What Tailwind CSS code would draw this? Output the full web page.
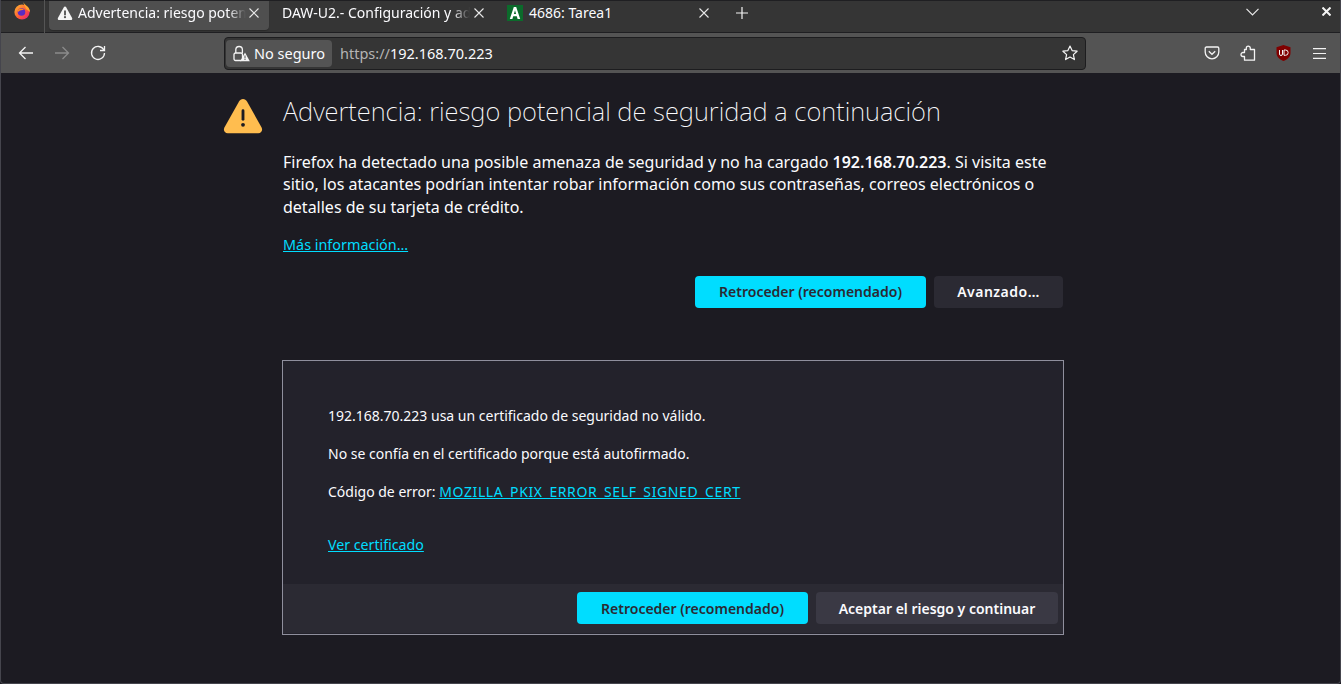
<!DOCTYPE html>
<html lang="es"><head><meta charset="utf-8"><title>Advertencia</title>
<script src="https://cdn.jsdelivr.net/npm/@tailwindcss/browser@4"></script></head>
<body class="m-0 h-[684px] w-[1341px] overflow-hidden bg-[#1c1b22] font-['Noto_Sans',sans-serif] text-[#fbfbfe]">
<div class="flex h-[684px] flex-col rounded-b-[4px] border-x border-b border-[#45454d]">
<!-- tabs -->
<div class="flex h-[33px] items-start border-t border-b border-[#1f1f22] bg-[#353535] text-[14px] leading-[20px]">
  <div class="flex h-[31px] w-[43px] items-start justify-center pt-[1px]">
    <svg width="18" height="18" viewBox="0 0 18 18" class="mr-[2px]"><defs><linearGradient id="ff" x1="0" y1="0" x2="1" y2="1"><stop offset="0" stop-color="#ffbd2e"/><stop offset=".55" stop-color="#ff5a36"/><stop offset="1" stop-color="#e31587"/></linearGradient></defs><circle cx="9" cy="10" r="7.6" fill="url(#ff)"/><path d="M10 0c1 2 3 3 5 5 1 1 2 3 2 5l-4-3z" fill="#ffa42e"/><circle cx="8.5" cy="10" r="3.8" fill="#5b2bc4"/><path d="M5 8c2-2 5-1 6 0-2 0-4 0-6 2z" fill="#ff8a1e"/></svg>
  </div>
  <div class="mt-[-1px] h-[33px] w-px bg-[#555]"></div>
  <div class="ml-[4px] flex h-[29px] w-[220px] items-center rounded-b-[4px] bg-[#4f4f4f] pb-[5px] pl-[8px] pr-[10px] shadow-[0_1px_1px_#2a2a2a]">
    <svg width="16" height="16" viewBox="0 0 16 16" class="mr-[5px] shrink-0"><path d="M8 1.600c.5 0 1 .3 1.300.8l5.800 10.500c.5 1-.2 2.100-1.300 2.100H2.200c-1.100 0-1.800-1.100-1.300-2.100L6.700 2.400C7 1.900 7.500 1.600 8 1.600z" fill="#f4f4f4"/><rect x="7.100" y="5.500" width="1.800" height="4.800" fill="#4f4f4f"/><circle cx="8" cy="12.200" r="1.100" fill="#4f4f4f"/></svg>
    <span class="w-[168px] overflow-hidden whitespace-nowrap [mask-image:linear-gradient(to_left,transparent,black_18px)]">Advertencia: riesgo potencial de seguridad</span>
    <svg width="10" height="10" viewBox="0 0 10 10" class="ml-auto shrink-0" stroke="#e8e8e8" stroke-width="1.100"><path d="M.5.500l9 9M9.500.500l-9 9"/></svg>
  </div>
  <div class="flex h-[29px] w-[223px] items-center pb-[5px] pl-[13px] pr-[8px]">
    <span class="w-[188px] overflow-hidden whitespace-nowrap [mask-image:linear-gradient(to_left,transparent,black_18px)]">DAW-U2.- Configuración y administración</span>
    <svg width="10" height="10" viewBox="0 0 10 10" class="ml-auto shrink-0" stroke="#e8e8e8" stroke-width="1.100"><path d="M.5.500l9 9M9.500.500l-9 9"/></svg>
  </div>
  <div class="flex h-[29px] w-[225px] items-center pb-[5px] pl-[15px] pr-[8px]">
    <svg width="16" height="16" viewBox="0 0 16 16" class="mr-[6px] shrink-0"><rect width="16" height="16" fill="#0b6b2b"/><path d="M2.800 14L6.800 2h2.400l4 12h-2.600l-.8-2.800H6.200L5.400 14zM6.900 9h2.200L8 5.200z" fill="#fff"/></svg>
    <span class="whitespace-nowrap">4686: Tarea1</span>
    <svg width="10" height="10" viewBox="0 0 10 10" class="ml-auto shrink-0" stroke="#e8e8e8" stroke-width="1.100"><path d="M.5.500l9 9M9.500.500l-9 9"/></svg>
  </div>
  <div class="ml-[19px] flex h-[24px] w-[12px] items-center justify-center">
    <svg width="12" height="12" viewBox="0 0 12 12" stroke="#f4f4f4" stroke-width="1.200"><path d="M6 0v12M0 6h12"/></svg>
  </div>
  <div class="ml-auto flex h-[21px] w-[13px] items-center justify-center">
    <svg width="13" height="8" viewBox="0 0 13 8" fill="none" stroke="#e8e8e8" stroke-width="1.200"><path d="M.5.800L6.500 6.800 12.500.800"/></svg>
  </div>
  <div class="ml-[63px] mr-[9px] flex h-[21px] w-[9px] items-center justify-center">
    <svg width="9" height="9" viewBox="0 0 9 9" stroke="#f4f4f4" stroke-width="2"><path d="M.5.500l8 8M8.500.500l-8 8"/></svg>
  </div>
</div>
<!-- nav -->
<div class="flex h-[40px] items-center bg-[#545454] pl-[17px] text-[14.5px]">
  <svg width="16" height="16" viewBox="0 0 16 16" fill="none" stroke="#f4f4f4" stroke-width="1.300"><path d="M15 8H1.500M7.500 2L1.500 8l6 6"/></svg>
  <svg width="16" height="16" viewBox="0 0 16 16" fill="none" stroke="#8b8b8b" stroke-width="1.300" class="ml-[20px]"><path d="M1 8h13.500M8.500 2l6 6-6 6"/></svg>
  <svg width="16" height="16" viewBox="0 0 16 16" fill="none" stroke="#f4f4f4" stroke-width="1.300" class="ml-[20px]"><path d="M13.800 5A6.500 6.500 0 1 0 14.500 8"/><path d="M14.500 1v4.500H10" /></svg>
  <div class="ml-[118px] flex h-[33px] w-[862px] items-center rounded-[4px] border border-[#1d1d1f] bg-[#353535] pl-[1px] pr-[7px]">
    <div class="flex h-[27px] w-[106px] items-center rounded-[4px] bg-[#545454] pl-[7px]">
      <svg width="17" height="17" viewBox="0 0 17 17" class="mr-[4px]"><path d="M2.800 8V4.800a3.300 3.300 0 0 1 6.600 0V8" fill="none" stroke="#f4f4f4" stroke-width="1.300"/><rect x="1" y="8" width="8.500" height="7.500" rx="1.500" fill="none" stroke="#f4f4f4" stroke-width="1.300"/><path d="M12 7.500l4.800 8.800H7.200z" fill="#f4f4f4"/><rect x="11.500" y="10.500" width="1" height="3" fill="#545454"/><rect x="11.500" y="14" width="1" height="1" fill="#545454"/></svg>
      <span class="whitespace-nowrap pt-[2px]">No seguro</span>
    </div>
    <div class="ml-[8px] whitespace-nowrap pt-[2px]"><span class="text-[#b4b4b4]">https://</span>192.168.70.223</div>
    <svg width="16" height="16" viewBox="0 0 16 16" fill="none" stroke="#f4f4f4" stroke-width="1.200" class="ml-auto"><path d="M8 1l2.100 4.600 5 .6-3.700 3.400 1 5L8 12.100 3.600 14.600l1-5L.9 6.200l5-.6z" stroke-linejoin="round"/></svg>
  </div>
  <div class="ml-[118px] flex items-center">
    <svg width="16" height="16" viewBox="0 0 16 16" fill="none" stroke="#f4f4f4" stroke-width="1.300"><path d="M2.500 2h11c.8 0 1.300.6 1.300 1.300V7A6.800 6.800 0 0 1 1.200 7V3.300C1.200 2.600 1.700 2 2.500 2z"/><path d="M4.800 6.300L8 9.300l3.200-3"/></svg>
    <svg width="16" height="16" viewBox="0 0 16 16" fill="none" stroke="#f4f4f4" stroke-width="1.300" class="ml-[20px]"><path d="M4.500 15.200H14.500V4.500H10.300V3.200a2 2 0 0 0-4 0V4.500H4.500V7.500H3a2 2 0 0 0 0 4h1.500z" stroke-linejoin="round"/></svg>
    <svg width="15" height="16" viewBox="0 0 15 16" class="ml-[20px]"><path d="M7.500 0L14.500 2.200V8c0 4-3.500 6.800-7 8C4 14.800.5 12 .5 8V2.200z" fill="#800000"/><path d="M3.500 5v4a1.500 1.500 0 0 0 3 0V5M8 5v5.300h1.500a2.600 2.600 0 0 0 0-5.300z" fill="none" stroke="#f4f4f4" stroke-width="1"/></svg>
    <svg width="13" height="11" viewBox="0 0 13 11" stroke="#f4f4f4" stroke-width="1.200" class="ml-[22px]"><path d="M0 .600h13M0 5.500h13M0 10.400h13"/></svg>
  </div>
</div>
<!-- content -->
<main class="flex-1 pl-[282px]">
  <div class="relative w-[780px]">
    <svg width="40" height="36" viewBox="0 0 42 38" preserveAspectRatio="none" class="absolute left-[-60px] top-[4px]"><path d="M21 1c1.800 0 3.300 1 4.200 2.600l15.300 27.500c1.500 2.800-.3 6-3.400 6H4.900c-3.100 0-4.900-3.200-3.400-6L16.800 3.600C17.700 2 19.200 1 21 1z" fill="#ffbd4f"/><rect x="19.500" y="12" width="3" height="12" rx="1.500" fill="#1c1b22"/><circle cx="21" cy="28.300" r="2" fill="#1c1b22"/></svg>
    <h1 class="mt-[21px] whitespace-nowrap text-[25.6px] font-extralight leading-[36px]">Advertencia: riesgo potencial de seguridad a continuación</h1>
    <p class="mt-[20.5px] text-[16px] leading-[22.5px]">Firefox ha detectado una posible amenaza de seguridad y no ha cargado <b class="font-semibold">192.168.70.223</b>. Si visita este sitio, los atacantes podrían intentar robar información como sus contraseñas, correos electrónicos o detalles de su tarjeta de crédito.</p>
    <a class="mt-[15.5px] inline-block text-[14.4px] leading-[21px] text-[#00ddff] underline">Más información…</a>
    <div class="mt-[20px] flex justify-end gap-[8px]">
      <button class="h-[32px] w-[231px] rounded-[4px] bg-[#00ddff] text-[14px] font-semibold text-[#2b2a33]">Retroceder (recomendado)</button>
      <button class="h-[32px] w-[129px] rounded-[4px] bg-[#2b2a33] text-[14px] font-semibold tracking-[0.5px]">Avanzado…</button>
    </div>
    <section class="ml-[-1px] mt-[52px] h-[275px] w-[782px] border border-[#8f8f9d] bg-[#23222b] text-[14px] leading-[21px]">
      <div class="px-[45px] pt-[44px]">
        <p>192.168.70.223 usa un certificado de seguridad no válido.</p>
        <p class="mt-[17px]">No se confía en el certificado porque está autofirmado.</p>
        <p class="mt-[17px]">Código de error: <a class="tracking-[0.6px] text-[#00ddff] underline">MOZILLA_PKIX_ERROR_SELF_SIGNED_CERT</a></p>
        <p class="mt-[32px]"><a class="text-[14.2px] text-[#00ddff] underline">Ver certificado</a></p>
      </div>
      <div class="mt-[29px] flex h-[49px] items-center justify-end gap-[8px] bg-[#2b2a33] pr-[5px]">
        <button class="h-[32px] w-[231px] rounded-[4px] bg-[#00ddff] font-semibold text-[#2b2a33]">Retroceder (recomendado)</button>
        <button class="h-[32px] w-[242px] rounded-[4px] bg-[#3a3944] font-semibold">Aceptar el riesgo y continuar</button>
      </div>
    </section>
  </div>
</main>
</div>
</body></html>
